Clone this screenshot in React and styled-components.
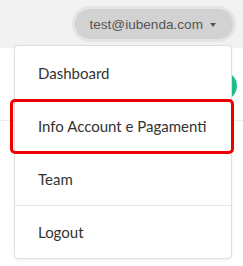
import React from 'react'
import styled, { createGlobalStyle } from 'styled-components'

const GlobalStyle = createGlobalStyle`
  html, body {
    margin: 0;
    padding: 0;
    background: #ffffff;
  }
  body {
    width: 243px;
    height: 266px;
    overflow: hidden;
    font-family: Lato, "Liberation Sans", Arial, sans-serif;
  }
`

const Page = styled.div`
  position: relative;
  width: 243px;
  height: 266px;
  overflow: hidden;
`

const Header = styled.header`
  height: 48px;
  background: #f2f2f2;
  display: flex;
  justify-content: flex-end;
  align-items: flex-start;
  padding: 9px 10px 0 0;
  box-sizing: border-box;
`

const UserButton = styled.button`
  height: 30px;
  padding: 0 17px 0 14px;
  border: none;
  border-radius: 15px;
  background: #d2d2d2;
  box-shadow: 0 0 0 3px #e4e4e4;
  color: #555555;
  font-family: "Liberation Sans", Arial, sans-serif;
  font-size: 13.6px;
  display: flex;
  align-items: center;
  gap: 7px;
  cursor: pointer;
`

const Caret = styled.span`
  width: 0;
  height: 0;
  border-left: 3.5px solid transparent;
  border-right: 3.5px solid transparent;
  border-top: 4px solid #555555;
  margin-top: 1px;
`

const Content = styled.div`
  position: relative;
  height: 218px;
  padding-top: 72px;
  box-sizing: border-box;
`

const Rule = styled.div`
  height: 1px;
  background: #ececec;
`

const GreenDot = styled.div`
  position: absolute;
  top: 24px;
  right: 6px;
  width: 28px;
  height: 28px;
  border-radius: 50%;
  background: #1fc08e;
`

const Menu = styled.nav`
  position: absolute;
  top: 45px;
  left: 14px;
  width: 218px;
  background: #ffffff;
  border: 1px solid #dedede;
  border-radius: 4px;
  box-shadow: 0 1px 4px rgba(0, 0, 0, 0.06);
  box-sizing: border-box;
  display: flex;
  flex-direction: column;
`

const MenuItem = styled.a`
  position: relative;
  height: 53px;
  box-sizing: border-box;
  display: flex;
  align-items: center;
  padding-left: 23px;
  color: #333333;
  font-size: 15px;
  text-decoration: none;
  border-top: ${p => (p.$first ? 'none' : '1px solid #e6e6e6')};

  ${p =>
    p.$highlight &&
    `
    z-index: 1;
    &::after {
      content: '';
      position: absolute;
      top: -1px;
      left: -5px;
      right: -3px;
      bottom: -2px;
      border: 3px solid #ee0000;
      border-radius: 5px;
    }
  `}
`

const items = ['Dashboard', 'Info Account e Pagamenti', 'Team', 'Logout']

export default function App() {
  return (
    <Page>
      <GlobalStyle />
      <Header>
        <UserButton>
          test@iubenda.com
          <Caret />
        </UserButton>
      </Header>
      <Content>
        <Rule />
        <GreenDot />
      </Content>
      <Menu>
        {items.map((label, i) => (
          <MenuItem key={label} $first={i === 0} $highlight={i === 1}>
            {label}
          </MenuItem>
        ))}
      </Menu>
    </Page>
  )
}
